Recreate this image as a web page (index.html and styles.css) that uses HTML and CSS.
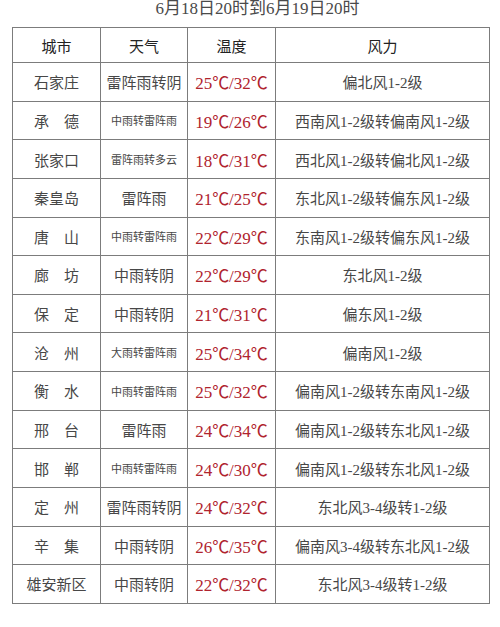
FILE: index.html
```html
<!DOCTYPE html>
<html lang="zh">
<head>
<meta charset="utf-8">
<title>天气预报</title>
<link rel="stylesheet" href="styles.css">
</head>
<body>
<div class="title">6月18日20时到6月19日20时</div>
<div class="table">
  <div class="cell head">城市</div><div class="cell head">天气</div><div class="cell head">温度</div><div class="cell head">风力</div>

  <div class="cell city">石家庄</div><div class="cell wx">雷阵雨转阴</div><div class="cell temp">25℃/32℃</div><div class="cell wind">偏北风1-2级</div>
  <div class="cell city">承　德</div><div class="cell wx small">中雨转雷阵雨</div><div class="cell temp">19℃/26℃</div><div class="cell wind">西南风1-2级转偏南风1-2级</div>
  <div class="cell city">张家口</div><div class="cell wx small">雷阵雨转多云</div><div class="cell temp">18℃/31℃</div><div class="cell wind">西北风1-2级转偏北风1-2级</div>
  <div class="cell city">秦皇岛</div><div class="cell wx">雷阵雨</div><div class="cell temp">21℃/25℃</div><div class="cell wind">东北风1-2级转偏东风1-2级</div>
  <div class="cell city">唐　山</div><div class="cell wx small">中雨转雷阵雨</div><div class="cell temp">22℃/29℃</div><div class="cell wind">东南风1-2级转偏东风1-2级</div>
  <div class="cell city">廊　坊</div><div class="cell wx">中雨转阴</div><div class="cell temp">22℃/29℃</div><div class="cell wind">东北风1-2级</div>
  <div class="cell city">保　定</div><div class="cell wx">中雨转阴</div><div class="cell temp">21℃/31℃</div><div class="cell wind">偏东风1-2级</div>
  <div class="cell city">沧　州</div><div class="cell wx small">大雨转雷阵雨</div><div class="cell temp">25℃/34℃</div><div class="cell wind">偏南风1-2级</div>
  <div class="cell city">衡　水</div><div class="cell wx small">中雨转雷阵雨</div><div class="cell temp">25℃/32℃</div><div class="cell wind">偏南风1-2级转东南风1-2级</div>
  <div class="cell city">邢　台</div><div class="cell wx">雷阵雨</div><div class="cell temp">24℃/34℃</div><div class="cell wind">偏南风1-2级转东北风1-2级</div>
  <div class="cell city">邯　郸</div><div class="cell wx small">中雨转雷阵雨</div><div class="cell temp">24℃/30℃</div><div class="cell wind">偏南风1-2级转东北风1-2级</div>
  <div class="cell city">定　州</div><div class="cell wx">雷阵雨转阴</div><div class="cell temp">24℃/32℃</div><div class="cell wind">东北风3-4级转1-2级</div>
  <div class="cell city">辛　集</div><div class="cell wx">中雨转阴</div><div class="cell temp">26℃/35℃</div><div class="cell wind">偏南风3-4级转东北风1-2级</div>
  <div class="cell city">雄安新区</div><div class="cell wx">中雨转阴</div><div class="cell temp">22℃/32℃</div><div class="cell wind">东北风3-4级转1-2级</div>
</div>
</body>
</html>
```

FILE: styles.css
```css
html, body {
  margin: 0;
  padding: 0;
  background: #ffffff;
}

body {
  width: 500px;
  height: 627px;
  overflow: hidden;
  font-family: "Liberation Serif", "Noto Sans CJK SC", serif;
  color: #454545;
}

.title {
  height: 27px;
  line-height: 17px;
  font-size: 17px;
  text-align: center;
  padding-left: 15px;
  color: #4a4a4a;
}

.table {
  margin-left: 12px;
  width: 478px;
  box-sizing: border-box;
  display: grid;
  grid-template-columns: 87px 86px 87px 1fr;
  grid-template-rows: 34px repeat(14, 37.64px);
  gap: 1px;
  padding: 1px;
  background: #7c7c7c;
}

.cell {
  background: #ffffff;
  display: flex;
  align-items: center;
  justify-content: center;
  white-space: nowrap;
  font-size: 15px;
}

.head {
  color: #222222;
  font-size: 15px;
}

.city {
  color: #474747;
}

.wx {
  color: #474747;
}

.wx.small {
  font-size: 11px;
}

.temp {
  color: #b0232e;
  font-size: 17px;
}

.wind {
  color: #474747;
  font-size: 15px;
}
```
